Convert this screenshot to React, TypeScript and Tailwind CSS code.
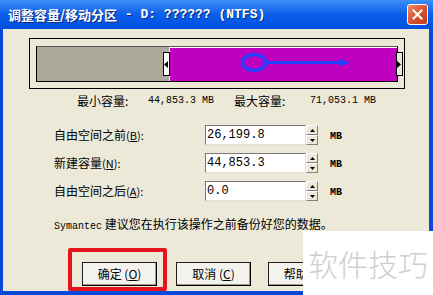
import React from "react"

const cjk = { fontFamily: '"Noto Sans CJK SC", "Noto Sans", sans-serif' }
const mono = { fontFamily: '"Liberation Mono", "Noto Sans CJK SC", monospace' }

function Spinner() {
  return (
    <div className="w-[12px] h-[20px] flex flex-col">
      <div className="h-[10px] bg-[#ECE9D8] border border-t-white border-l-white border-b-[#808080] border-r-[#808080] flex items-center justify-center">
        <svg width="5" height="3" viewBox="0 0 5 3"><path d="M2.5 0 L5 3 L0 3 Z" fill="#000" /></svg>
      </div>
      <div className="h-[10px] bg-[#ECE9D8] border border-t-white border-l-white border-b-[#808080] border-r-[#808080] flex items-center justify-center">
        <svg width="5" height="3" viewBox="0 0 5 3"><path d="M0 0 L5 0 L2.5 3 Z" fill="#000" /></svg>
      </div>
    </div>
  )
}

function Row({ label, keyChar, value }: { label: string; keyChar: string; value: string }) {
  return (
    <div className="flex items-center h-[20px] pl-[51px]">
      <div className="w-[151px] text-[12px] leading-[12px] text-black" style={cjk}>
        {label}
        <span className="text-[11px]">(<u>{keyChar}</u>):</span>
      </div>
      <div className="w-[101px] h-[20px] bg-white border border-t-[#7a7a7a] border-l-[#7a7a7a] border-b-[#e4e2d8] border-r-[#e4e2d8] flex items-center pl-[1px]">
        <span className="text-[12px] leading-[12px] text-black" style={mono}>{value}</span>
      </div>
      <Spinner />
      <span className="ml-[12px] mt-[4px] text-[10px] leading-[12px] font-bold text-black" style={mono}>MB</span>
    </div>
  )
}

function Button({ children }: { children: React.ReactNode }) {
  return (
    <div className="w-[75px] h-[24px] shrink-0 bg-[#F4F3EE] border border-[#1e1e1e] border-b-[#000] border-r-[#000] shadow-[inset_-1px_-1px_0_#9d9a8c] flex items-center justify-center text-[12px] text-black" style={cjk}>
      {children}
    </div>
  )
}

export default function App() {
  return (
    <div className="w-[433px] h-[295px] relative overflow-hidden bg-[#0a4ad8] flex flex-col">
      {/* title bar */}
      <div className="h-[29px] flex items-center pl-[8px] pr-[5px] bg-linear-to-b from-[#3d8ef6] via-[#0a5ee9] to-[#0350e0]">
        <div className="flex items-center text-white font-bold [text-shadow:1px_1px_0_#0a2a80]">
          <span className="text-[13px] leading-[14px]" style={cjk}>调整容量/移动分区</span>
          <span className="text-[13px] leading-[14px] whitespace-pre" style={mono}> - D: ?????? (NTFS)</span>
        </div>
        <div className="ml-auto w-[21px] h-[21px] rounded-[3px] border border-white bg-linear-to-br from-[#e9876b] via-[#d9532f] to-[#c23a16] flex items-center justify-center">
          <svg width="11" height="11" viewBox="0 0 11 11">
            <path d="M1.5 1.5 L9.5 9.5 M9.5 1.5 L1.5 9.5" stroke="#fff" strokeWidth="2" strokeLinecap="square" />
          </svg>
        </div>
      </div>

      {/* content */}
      <div className="flex-1 ml-[3px] mr-[4px] mb-[4px] bg-[#ECE9D8] flex flex-col">
        <div className="ml-[26px] mt-[9px] w-[376px] h-[51px] border border-black pt-[7px] pl-[6px]">
          <div className="relative w-[362px] h-[36px] border border-black border-t-[#555] flex">
            <div className="w-[132px] bg-[#ABA99B]" />
            <div className="flex-1 bg-[#C000C0] border-t border-l border-white" />
            <div className="absolute left-[126px] top-[5px] w-[7px] h-[24px] bg-white border border-black flex items-center">
              <svg width="4" height="7" viewBox="0 0 4 7"><path d="M0 3.5 L4 0 L4 7 Z" fill="#000" /></svg>
            </div>
            <div className="absolute left-[359px] top-[5px] w-[7px] h-[24px] bg-[#ECE9D8] border border-black flex items-center">
              <svg width="4" height="7" viewBox="0 0 4 7"><path d="M0 0 L4 3.5 L0 7 Z" fill="#000" /></svg>
            </div>
            <svg className="absolute left-0 top-0" width="362" height="36" viewBox="0 0 362 36">
              <ellipse cx="217" cy="15.5" rx="11.5" ry="8" fill="none" stroke="#2244ff" strokeWidth="3.5" />
              <path d="M229 15.5 L306 15.5" stroke="#2244ff" strokeWidth="3" />
              <path d="M303 12 L313 15.5 L303 19 Z" fill="#2244ff" />
            </svg>
          </div>
        </div>

        <div className="mt-[6px] h-[12px] flex items-center pl-[74px] text-[12px] leading-[12px] text-black">
          <span className="w-[71px]" style={cjk}>最小容量:</span>
          <span className="w-[86px] text-[10px]" style={mono}>44,853.3 MB</span>
          <span className="w-[76px]" style={cjk}>最大容量:</span>
          <span className="text-[10px]" style={mono}>71,053.1 MB</span>
        </div>

        <div className="mt-[18px] flex flex-col gap-[8px]">
          <Row label="自由空间之前" keyChar="B" value="26,199.8" />
          <Row label="新建容量" keyChar="N" value="44,853.3" />
          <Row label="自由空间之后" keyChar="A" value="0.0" />
        </div>

        <div className="mt-[17px] pl-[51px] text-[12px] leading-[12px] text-black" style={cjk}>
          <span className="text-[10px]" style={mono}>Symantec</span> 建议您在执行该操作之前备份好您的数据。
        </div>

        <div className="mt-[29px] flex pl-[79px]">
          <Button>确定 (<u>O</u>)</Button>
          <div className="ml-[19px]">
            <Button>取消 (<u>C</u>)</Button>
          </div>
          {/* third button sits under the watermark */}
          <div className="ml-[17px]">
            <Button>帮助 (<u>H</u>)</Button>
          </div>
        </div>
      </div>

      {/* red highlight annotation */}
      <div className="absolute left-[68px] top-[248px] w-[99px] h-[43px] border-[4px] border-[#e3151c] rounded-[2px]" />

      {/* watermark */}
      <div className="absolute left-[303px] top-[231px] w-[130px] h-[64px] bg-white flex items-center justify-center">
        <span className="text-[30px] leading-[30px] text-[#cfcfcf] font-light" style={cjk}>软件技巧</span>
      </div>
    </div>
  )
}
